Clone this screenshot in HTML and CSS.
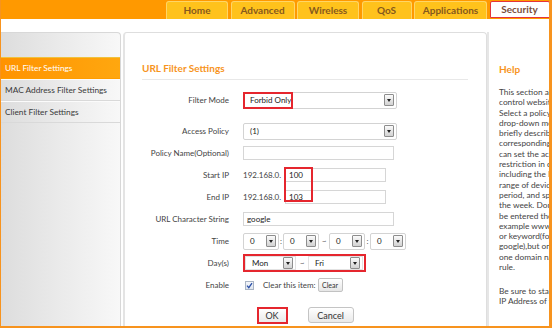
FILE: index.html
```html
<!DOCTYPE html>
<html lang="en">
<head>
    <meta charset="UTF-8">
    <meta name="viewport" content="width=device-width, initial-scale=1.0">
    <title>URL Filter Settings</title>
    <link rel="stylesheet" href="styles.css">
</head>
<body>

    <div class="page">
        <div class="topbar">
            <ul class="tabs">
                <li class="tab">Home</li>
                <li class="tab">Advanced</li>
                <li class="tab">Wireless</li>
                <li class="tab">QoS</li>
                <li class="tab">Applications</li>
                <li class="tab active">Security</li>
            </ul>
        </div>

        <div class="content">
            <div class="sidebar">
                <div class="side-head"></div>
                <a class="side-item active">URL Filter Settings</a>
                <a class="side-item">MAC Address Filter Settings</a>
                <a class="side-item">Client Filter Settings</a>
            </div>

            <div class="main">
                <h2 class="title">URL Filter Settings</h2>
                <div class="form">
                    <div class="row first">
                        <label>Filter Mode</label>
                        <div class="select wide">
                            <span>Forbid Only</span><span class="arrow"></span>
                            <span class="hl hl-mode"></span>
                        </div>
                    </div>
                    <div class="row">
                        <label>Access Policy</label>
                        <div class="select wide"><span>(1)</span><span class="arrow"></span></div>
                    </div>
                    <div class="row">
                        <label>Policy Name(Optional)</label>
                        <input class="text wide" type="text" value="">
                    </div>
                    <div class="ip-group">
                        <div class="row">
                            <label>Start IP</label>
                            <div class="ip"><span class="ip-prefix">192.168.0.</span><input class="text short" type="text" value="100"></div>
                        </div>
                        <div class="row">
                            <label>End IP</label>
                            <div class="ip"><span class="ip-prefix">192.168.0.</span><input class="text short" type="text" value="103"></div>
                        </div>
                        <span class="hl hl-ip"></span>
                    </div>
                    <div class="row">
                        <label>URL Character String</label>
                        <input class="text wide" type="text" value="google">
                    </div>
                    <div class="row">
                        <label>Time</label>
                        <div class="time">
                            <div class="select mini"><span>0</span><span class="arrow"></span></div>
                            <span class="sep colon">:</span>
                            <div class="select mini"><span>0</span><span class="arrow"></span></div>
                            <span class="sep tilde">~</span>
                            <div class="select mini"><span>0</span><span class="arrow"></span></div>
                            <span class="sep colon2">:</span>
                            <div class="select mini"><span>0</span><span class="arrow"></span></div>
                        </div>
                    </div>
                    <div class="row">
                        <label>Day(s)</label>
                        <div class="days">
                            <div class="select day mon"><span>Mon</span><span class="arrow"></span></div>
                            <span class="sep day-sep">~</span>
                            <div class="select day fri"><span>Fri</span><span class="arrow"></span></div>
                        </div>
                    </div>
                    <div class="row">
                        <label>Enable</label>
                        <div class="enable">
                            <span class="check">
                                <svg width="7" height="7" viewBox="0 0 7 7"><path d="M1 3.6 L2.8 5.6 L6 1.2" fill="none" stroke="#2a4fa8" stroke-width="1.3"/></svg>
                            </span>
                            <span class="clear-text">Clear this item:</span>
                            <button class="btn-clear">Clear</button>
                        </div>
                    </div>
                </div>
                <div class="actions">
                    <button class="btn ok">OK</button>
                    <button class="btn cancel">Cancel</button>
                </div>
            </div>

            <div class="help">
                <h3>Help</h3>
                <p>This section allows you to<br>control website access.<br>Select a policy from the<br>drop-down menu and<br>briefly describe it in the<br>corresponding field. You<br>can set the access<br>restriction in detail<br>including the IP address<br>range of devices, time<br>period, and specific days of<br>the week. Domain name can<br>be entered the URL string, for<br>example www.google.com<br>or keyword(for example<br>google),but only<br>one domain name for each<br>rule.</p>
                <p>Be sure to state the<br>IP Address of the device.</p>
            </div>
        </div>
    </div>

</body>
</html>
```

FILE: styles.css
```css
body {
    margin: 0;
    font-family: Lato, "Liberation Sans", sans-serif;
    background-color: #fff;
}
.page {
    width: 552px;
    height: 328px;
    box-sizing: border-box;
    border-left: 1px solid #f7931e;
    border-right: 3px solid #f7931e;
    border-bottom: 2px solid #f7931e;
    display: flex;
    flex-direction: column;
    overflow: hidden;
}
.topbar {
    height: 19px;
    flex: none;
    background-color: #ff9900;
    padding: 1px 0 0 165px;
    box-sizing: border-box;
}
.tabs {
    list-style: none;
    margin: 0;
    padding: 0;
    display: grid;
    grid-template-columns: 62px 64px 62px 50px 73px 60px;
    column-gap: 2.5px;
    align-items: start;
}
.tab {
    height: 18px;
    box-sizing: border-box;
    background-color: #ffc21c;
    border: 1px solid #ffd566;
    border-bottom: none;
    border-radius: 3px 3px 0 0;
    color: #86591c;
    font-size: 10px;
    font-weight: bold;
    line-height: 16px;
    text-align: center;
}
.tab.active {
    height: 17px;
    background-color: #fff;
    border: 1px solid #e5343a;
    border-radius: 2px 2px 0 0;
    color: #7a4d3a;
    line-height: 15px;
}
.content {
    flex: 1;
    min-height: 0;
    margin-top: 13px;
    display: flex;
}
.sidebar {
    width: 120px;
    flex: none;
    margin-right: 2px;
    box-sizing: border-box;
    border-top: 1px solid #d8d8d8;
    border-right: 1px solid #d8d8d8;
    border-top-right-radius: 4px;
    background: linear-gradient(to right, #dddddd, #f8f8f8);
}
.side-head {
    height: 24px;
}
.side-item {
    display: block;
    height: 20px;
    line-height: 20px;
    padding-left: 4px;
    border-top: 1px solid #fbfbfb;
    border-bottom: 1px solid #d9d9d9;
    color: #3a3a3a;
    font-size: 8.3px;
}
.side-item.active {
    background: linear-gradient(to right, #ff9300, #ffa70f);
    border-top-color: #efc23e;
    border-bottom-color: #ff9d00;
    color: #fff;
}
.main {
    width: 364px;
    flex: none;
    box-sizing: border-box;
    border: 1px solid #dedede;
    border-left: 2px solid #e4e4e4;
    border-bottom: none;
    border-radius: 4px 4px 0 0;
    padding: 28px 18px 0 17px;
}
.title {
    margin: 0;
    padding-bottom: 4px;
    border-bottom: 1px solid #e8e8e8;
    color: #f7941d;
    font-size: 10px;
    line-height: 14px;
    font-weight: bold;
}
.form {
    margin-top: 9px;
}
.row {
    height: 22px;
    display: grid;
    grid-template-columns: 87px auto;
    column-gap: 14px;
    align-items: center;
    font-size: 8px;
    color: #444;
}
.row.first {
    margin-bottom: 9px;
}
.row label {
    text-align: right;
}
.select {
    position: relative;
    height: 17px;
    box-sizing: border-box;
    display: flex;
    align-items: center;
    justify-content: space-between;
    border: 1px solid #d3d3d3;
    border-radius: 2px;
    padding: 0 2px 0 6px;
    background-color: #fff;
    color: #222;
    font-size: 8px;
}
.select.wide {
    width: 154px;
}
.select.mini {
    width: 36px;
}
.arrow {
    width: 10px;
    height: 12px;
    box-sizing: border-box;
    border: 1px solid #8d8d8d;
    border-radius: 1px;
    background: linear-gradient(#fbfbfb, #d2d2d2);
    display: flex;
    align-items: center;
    justify-content: center;
}
.arrow::after {
    content: "";
    border-left: 2.5px solid transparent;
    border-right: 2.5px solid transparent;
    border-top: 3px solid #222;
}
.hl {
    position: absolute;
    box-sizing: border-box;
    border: 2px solid #e5262e;
}
.hl-mode {
    left: -1px;
    top: -1px;
    width: 50px;
    height: 17px;
}
.text {
    height: 14px;
    box-sizing: border-box;
    border: 1px solid #d6d6d6;
    padding: 0 3px;
    font-family: Lato, "Liberation Sans", sans-serif;
    font-size: 8px;
    color: #222;
}
.text.wide {
    width: 151px;
}
.text.short {
    width: 101px;
}
.ip-group {
    position: relative;
}
.ip {
    display: flex;
    align-items: center;
}
.ip-prefix {
    width: 42px;
}
.hl-ip {
    left: 142px;
    top: 3px;
    width: 29px;
    height: 35px;
}
.time, .days, .enable {
    display: flex;
    align-items: center;
}
.sep {
    text-align: center;
    color: #555;
}
.colon {
    width: 4px;
}
.tilde {
    width: 10px;
}
.colon2 {
    width: 5px;
}
.days {
    width: 123px;
    height: 18px;
    box-sizing: border-box;
    border: 2px solid #e5262e;
    padding: 0 1px 0 0;
}
.select.day {
    height: 14px;
    border-color: #e2e2e2;
    border-radius: 0;
}
.select.mon {
    width: 51px;
}
.select.fri {
    width: 55px;
}
.day-sep {
    width: 12px;
}
.check {
    width: 9px;
    height: 9px;
    box-sizing: border-box;
    margin-left: 2px;
    border: 1px solid #a9b4c4;
    background: linear-gradient(#f4f6fa, #dfe5ee);
    display: flex;
    align-items: center;
    justify-content: center;
}
.clear-text {
    margin-left: 9px;
}
.btn-clear {
    margin-left: 2px;
    width: 25px;
    height: 14px;
    padding: 0;
    border: 1px solid #c2c2c2;
    border-radius: 2px;
    background: linear-gradient(#ffffff, #e6e6e6);
    font-family: Lato, "Liberation Sans", sans-serif;
    font-size: 7px;
    color: #333;
}
.actions {
    margin-top: 11px;
    display: flex;
    justify-content: center;
    gap: 20px;
}
.btn {
    padding: 0;
    box-sizing: border-box;
    background: linear-gradient(#ffffff, #e9e9e9);
    font-family: Lato, "Liberation Sans", sans-serif;
    font-size: 9px;
    color: #333;
}
.btn.ok {
    width: 31px;
    height: 17px;
    border: 2px solid #e5262e;
}
.btn.cancel {
    width: 46px;
    height: 16px;
    border: 1px solid #c4c4c4;
    border-radius: 3px;
}
.help {
    flex: 1;
    min-width: 0;
    border-left: 2px solid #e6e6e6;
    padding: 30px 0 0 10px;
    overflow: hidden;
    white-space: nowrap;
}
.help h3 {
    margin: 0;
    color: #f7941d;
    font-size: 10px;
    line-height: 14px;
    font-weight: bold;
}
.help p {
    margin: 11px 0 0;
    font-size: 8.3px;
    line-height: 10.3px;
    color: #444;
}
.help p + p {
    margin-top: 13.7px;
}
```
